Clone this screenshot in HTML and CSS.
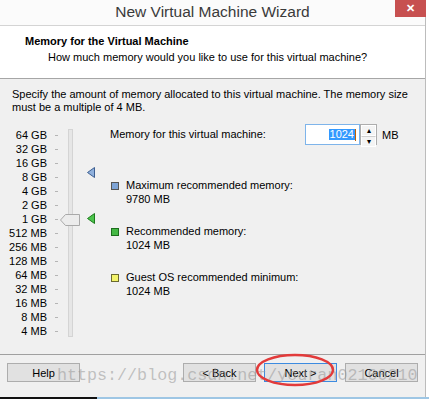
FILE: index.html
```html
<!DOCTYPE html>
<html lang="en">

<head>
    <meta charset="UTF-8">
    <meta name="viewport" content="width=device-width, initial-scale=1.0">
    <title>New Virtual Machine Wizard</title>
    <link rel="stylesheet" href="styles.css">
</head>

<body>
    <div class="screen">

        <div class="window">
            <!-- title bar -->
            <div class="titlebar">
                <span class="title">New Virtual Machine Wizard</span>
                <span class="close">&#x2715;</span>
            </div>

            <!-- page header -->
            <div class="header">
                <h1>Memory for the Virtual Machine</h1>
                <p>How much memory would you like to use for this virtual machine?</p>
            </div>

            <div class="content">
                <p class="intro">Specify the amount of memory allocated to this virtual machine. The memory size must be a multiple of 4&nbsp;MB.</p>

                <div class="memory">
                    <!-- slider with the size scale -->
                    <div class="scale">
                        <ul class="labels">
                            <li><span>64 GB</span><i></i></li>
                            <li><span>32 GB</span><i></i></li>
                            <li><span>16 GB</span><i></i></li>
                            <li><span>8 GB</span><i></i></li>
                            <li><span>4 GB</span><i></i></li>
                            <li><span>2 GB</span><i></i></li>
                            <li><span>1 GB</span><i></i></li>
                            <li><span>512 MB</span><i></i></li>
                            <li><span>256 MB</span><i></i></li>
                            <li><span>128 MB</span><i></i></li>
                            <li><span>64 MB</span><i></i></li>
                            <li><span>32 MB</span><i></i></li>
                            <li><span>16 MB</span><i></i></li>
                            <li><span>8 MB</span><i></i></li>
                            <li><span>4 MB</span><i></i></li>
                        </ul>
                        <div class="track">
                            <svg class="thumb" width="20" height="12" viewBox="0 0 20 12">
                                <path d="M0.5 6 L5.5 0.5 H19.5 V11.5 H5.5 Z" fill="#ececec" stroke="#a9a9a9" />
                            </svg>
                        </div>
                        <div class="marks">
                            <svg class="mark mark-max" width="8" height="11" viewBox="0 0 8 11">
                                <path d="M0.5 5.5 L7.5 0.5 V10.5 Z" fill="#8fb0dc" stroke="#3d5f91" />
                            </svg>
                            <svg class="mark mark-rec" width="8" height="11" viewBox="0 0 8 11">
                                <path d="M0.5 5.5 L7.5 0.5 V10.5 Z" fill="#4cc44c" stroke="#1c7a1c" />
                            </svg>
                        </div>
                    </div>

                    <!-- memory amount and legend -->
                    <div class="settings">
                        <div class="amount">
                            <label>Memory for this virtual machine:</label>
                            <div class="spin">
                                <div class="field"><span class="sel">1024</span><span class="caret"></span></div>
                                <div class="arrows">
                                    <span>&#x25B4;</span>
                                    <span>&#x25BE;</span>
                                </div>
                            </div>
                            <span class="unit">MB</span>
                        </div>

                        <div class="legend">
                            <div class="item">
                                <b class="box box-max"></b>
                                <div>Maximum recommended memory:<br>9780 MB</div>
                            </div>
                            <div class="item">
                                <b class="box box-rec"></b>
                                <div>Recommended memory:<br>1024 MB</div>
                            </div>
                            <div class="item">
                                <b class="box box-min"></b>
                                <div>Guest OS recommended minimum:<br>1024 MB</div>
                            </div>
                        </div>
                    </div>
                </div>
            </div>

            <!-- buttons -->
            <div class="footer">
                <button>Help</button>
                <div class="nav">
                    <button>&lt; Back</button>
                    <button class="default">Next &gt;</button>
                    <button>Cancel</button>
                </div>
            </div>
        </div>

        <div class="taskbar"><span></span></div>

        <!-- blog watermark and red circle drawn on top of the screenshot -->
        <div class="watermark">https://blog.csdn.net/youran02100210</div>
        <svg class="circle" width="82" height="36" viewBox="0 0 82 36">
            <ellipse cx="40" cy="17" rx="38" ry="15" fill="none" stroke="#e23b3b" stroke-width="2.5" />
        </svg>
    </div>
</body>

</html>
```

FILE: styles.css
```css
body {
    margin: 0;
    background: #fff;
    font-family: 'Liberation Sans', Arial, sans-serif;
    font-size: 11px;
    color: #000;
}

.screen {
    position: relative;
    width: 429px;
    height: 399px;
    overflow: hidden;
}

.window {
    width: 425px;
    height: 397px;
    border-right: 1px solid #bcbcbc;
    display: flex;
    flex-direction: column;
}

.titlebar {
    position: relative;
    height: 25px;
    background: #fbfbfb;
    border-bottom: 1px solid #d4d4d4;
    display: flex;
    justify-content: center;
    align-items: center;
}

.title {
    font-size: 15.5px;
    color: #3a3a3a;
    margin-top: -2px;
}

.close {
    position: absolute;
    top: 0;
    right: -1px;
    width: 31px;
    height: 17px;
    background: #c75050;
    color: #fff;
    font-size: 11px;
    font-weight: bold;
    display: flex;
    justify-content: center;
    align-items: center;
}

.header {
    height: 53px;
    background: #fff;
    border-bottom: 1px solid #a6a6a6;
    padding-left: 25px;
    box-sizing: border-box;

    h1 {
        margin: 8px 0 0;
        font-size: 11px;
        line-height: 14px;
        font-weight: bold;
    }

    p {
        margin: 2px 0 0 23px;
        line-height: 14px;
    }
}

.content {
    height: 275px;
    background: #f0f0f0;
    padding: 9px 0 0 12px;
    box-sizing: border-box;
}

.intro {
    margin: 0;
    line-height: 13px;
    width: 408px;
}

.memory {
    display: flex;
    margin-top: 10px;
}

.scale {
    display: flex;
    margin-top: 4px;
}

.labels {
    list-style: none;
    margin: 0 0 0 -5px;
    padding: 0;

    li {
        height: 14px;
        display: flex;
        align-items: center;
    }

    span {
        width: 40px;
        white-space: nowrap;
        text-align: right;
    }

    i {
        width: 3px;
        height: 1px;
        margin-left: 8px;
        background: #b5b5b5;
    }
}

.track {
    position: relative;
    width: 3px;
    height: 206px;
    margin: 1px 0 0 10px;
    background: #e6e6e6;
    border: 1px solid #d4d4d4;
}

.thumb {
    position: absolute;
    top: 84px;
    left: -9px;
}

.marks {
    position: relative;
    width: 37px;
}

.mark {
    position: absolute;
    left: 14px;
}

.mark-max {
    top: 39px;
}

.mark-rec {
    top: 85px;
}

.settings {
    display: flex;
    flex-direction: column;
}

.amount {
    display: flex;
    align-items: center;
    height: 21px;

    label {
        width: 195px;
        margin-top: -2px;
    }
}

.spin {
    display: flex;
    height: 21px;
}

.field {
    width: 55px;
    height: 21px;
    box-sizing: border-box;
    border: 1px solid #7eb4ea;
    background: #fff;
    display: flex;
    justify-content: flex-end;
    align-items: center;
    padding-right: 3px;
}

.sel {
    background: #3399ff;
    color: #fff;
    line-height: 11px;
    padding: 0 1px;
}

.caret {
    width: 1px;
    height: 12px;
    background: #c06000;
}

.arrows {
    width: 17px;
    height: 21px;
    box-sizing: border-box;
    border: 1px solid #adadad;
    display: flex;
    flex-direction: column;

    span {
        flex: 1;
        font-size: 8px;
        line-height: 9px;
        text-align: center;
        background: #f4f4f4;
        border: 1px solid #fff;
        color: #000;
    }

    span + span {
        border-top-color: #cfcfcf;
    }
}

.unit {
    margin-left: 5px;
}

.legend {
    margin-top: 33px;
    display: flex;
    flex-direction: column;
    gap: 18px;
}

.item {
    display: flex;
    line-height: 14px;

    b {
        width: 6px;
        height: 6px;
        margin: 4px 7px 0 1px;
        border: 1px solid #555;
    }
}

.box-max {
    background: #7ea4d6;
}

.box-rec {
    background: #44b844;
    border-color: #1d6e1d !important;
}

.box-min {
    background: #f3f36a;
    border-color: #6a6a30 !important;
}

.footer {
    flex: 1;
    background: #f0f0f0;
    border-top: 1px solid #a0a0a0;
    display: flex;
    justify-content: space-between;
    align-items: flex-start;
    padding: 8px 7px 0 7px;
}

.nav {
    display: flex;
    gap: 8px;
}

button {
    width: 73px;
    height: 19px;
    padding: 0;
    background: #e1e1e1;
    border: 1px solid #adadad;
    font-family: 'Liberation Sans', Arial, sans-serif;
    font-size: 11px;
    color: #000;
}

button.default {
    border-color: #3c8be0;
}

.taskbar {
    height: 2px;
    background: #9ec6e4;

    span {
        display: block;
        width: 97px;
        height: 2px;
        background: #111;
    }
}

.watermark {
    position: absolute;
    left: 57px;
    top: 366px;
    font-family: 'Liberation Mono', 'Courier New', monospace;
    font-size: 16.7px;
    color: rgba(150, 150, 150, 0.55);
    letter-spacing: 0;
}

.circle {
    position: absolute;
    left: 255px;
    top: 353px;
}
```
